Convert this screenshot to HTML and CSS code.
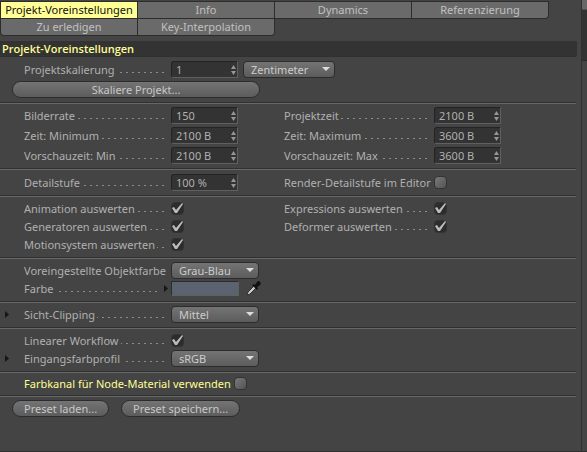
FILE: index.html
```html
<!DOCTYPE html>
<html lang="de">
<head>
<meta charset="utf-8">
<title>Projekt-Voreinstellungen</title>
<link rel="stylesheet" href="styles.css">
</head>
<body>
<div class="window">
<main class="panel">
  <nav class="tabs">
    <button class="tab active">Projekt-Voreinstellungen</button>
    <button class="tab">Info</button>
    <button class="tab">Dynamics</button>
    <button class="tab end">Referenzierung</button>
    <button class="tab first">Zu erledigen</button>
    <button class="tab end">Key-Interpolation</button>
  </nav>
  <h1 class="title">Projekt-Voreinstellungen</h1>

  <section class="group">
    <div class="row">
      <label class="label" for="scale">Projektskalierung<i class="dots"></i></label>
      <div class="control wide">
        <span class="field"><input id="scale" value="1"><svg class="spin" viewBox="0 0 5 10"><path d="M0 4L2.5 0L5 4ZM0 6L2.5 10L5 6Z"/></svg></span>
        <span class="select"><select aria-label="Einheit"><option>Zentimeter</option></select><svg class="arrow" viewBox="0 0 8 5"><path d="M0 0H8L4 4Z"/></svg></span>
      </div>
    </div>
    <div class="buttons"><button class="pill large">Skaliere Projekt...</button></div>
  </section>

  <section class="group">
    <div class="row">
      <label class="label" for="rate">Bilderrate<i class="dots"></i></label>
      <div class="control"><span class="field"><input id="rate" value="150"><svg class="spin" viewBox="0 0 5 10"><path d="M0 4L2.5 0L5 4ZM0 6L2.5 10L5 6Z"/></svg></span></div>
      <label class="label" for="time">Projektzeit<i class="dots"></i></label>
      <div class="control"><span class="field"><input id="time" value="2100 B"><svg class="spin" viewBox="0 0 5 10"><path d="M0 4L2.5 0L5 4ZM0 6L2.5 10L5 6Z"/></svg></span></div>
    </div>
    <div class="row">
      <label class="label" for="tmin">Zeit: Minimum<i class="dots"></i></label>
      <div class="control"><span class="field"><input id="tmin" value="2100 B"><svg class="spin" viewBox="0 0 5 10"><path d="M0 4L2.5 0L5 4ZM0 6L2.5 10L5 6Z"/></svg></span></div>
      <label class="label" for="tmax">Zeit: Maximum<i class="dots"></i></label>
      <div class="control"><span class="field"><input id="tmax" value="3600 B"><svg class="spin" viewBox="0 0 5 10"><path d="M0 4L2.5 0L5 4ZM0 6L2.5 10L5 6Z"/></svg></span></div>
    </div>
    <div class="row">
      <label class="label" for="pmin">Vorschauzeit: Min<i class="dots"></i></label>
      <div class="control"><span class="field"><input id="pmin" value="2100 B"><svg class="spin" viewBox="0 0 5 10"><path d="M0 4L2.5 0L5 4ZM0 6L2.5 10L5 6Z"/></svg></span></div>
      <label class="label" for="pmax">Vorschauzeit: Max<i class="dots"></i></label>
      <div class="control"><span class="field"><input id="pmax" value="3600 B"><svg class="spin" viewBox="0 0 5 10"><path d="M0 4L2.5 0L5 4ZM0 6L2.5 10L5 6Z"/></svg></span></div>
    </div>
  </section>

  <section class="group roomy">
    <div class="row">
      <label class="label" for="lod">Detailstufe<i class="dots"></i></label>
      <div class="control"><span class="field"><input id="lod" value="100 %"><svg class="spin" viewBox="0 0 5 10"><path d="M0 4L2.5 0L5 4ZM0 6L2.5 10L5 6Z"/></svg></span></div>
      <label class="label" for="rlod">Render-Detailstufe im Editor</label>
      <div class="control"><span class="check"><input type="checkbox" id="rlod"></span></div>
    </div>
  </section>

  <section class="group compact">
    <div class="row">
      <label class="label" for="anim">Animation auswerten<i class="dots"></i></label>
      <div class="control"><span class="check"><input type="checkbox" id="anim" checked><svg class="tick" viewBox="0 0 13 13"><path d="M1 6L3 5L5 8L11 1L12 2L6 11L4 11Z"/></svg></span></div>
      <label class="label" for="expr">Expressions auswerten<i class="dots"></i></label>
      <div class="control"><span class="check"><input type="checkbox" id="expr" checked><svg class="tick" viewBox="0 0 13 13"><path d="M1 6L3 5L5 8L11 1L12 2L6 11L4 11Z"/></svg></span></div>
    </div>
    <div class="row">
      <label class="label" for="gen">Generatoren auswerten<i class="dots"></i></label>
      <div class="control"><span class="check"><input type="checkbox" id="gen" checked><svg class="tick" viewBox="0 0 13 13"><path d="M1 6L3 5L5 8L11 1L12 2L6 11L4 11Z"/></svg></span></div>
      <label class="label" for="def">Deformer auswerten<i class="dots"></i></label>
      <div class="control"><span class="check"><input type="checkbox" id="def" checked><svg class="tick" viewBox="0 0 13 13"><path d="M1 6L3 5L5 8L11 1L12 2L6 11L4 11Z"/></svg></span></div>
    </div>
    <div class="row">
      <label class="label" for="motion">Motionsystem auswerten<i class="dots"></i></label>
      <div class="control"><span class="check"><input type="checkbox" id="motion" checked><svg class="tick" viewBox="0 0 13 13"><path d="M1 6L3 5L5 8L11 1L12 2L6 11L4 11Z"/></svg></span></div>
    </div>
  </section>

  <section class="group compact">
    <div class="row">
      <label class="label" for="objcol">Voreingestellte Objektfarbe</label>
      <div class="control wide"><span class="select"><select id="objcol"><option>Grau-Blau</option></select><svg class="arrow" viewBox="0 0 8 5"><path d="M0 0H8L4 4Z"/></svg></span></div>
    </div>
    <div class="row">
      <label class="label" for="color">Farbe<i class="dots"></i><svg class="fold inner" viewBox="0 0 4 7"><path d="M0 0L4 3.5L0 7Z"/></svg></label>
      <div class="control wide">
        <button class="swatch" id="color" aria-label="Farbe"></button>
        <button class="picker" aria-label="Pipette"><svg viewBox="0 0 15 15"><path class="glass" d="M1 14L2 11L8 5L10 7L4 13Z"/><path class="bulb" d="M6 4L8 3L9 4L11 1Q13-1 14 1Q16 3 13 5L11 6L12 7L11 9Z"/></svg></button>
      </div>
    </div>
  </section>

  <section class="group">
    <div class="row">
      <svg class="fold" viewBox="0 0 4 7"><path d="M0 0L4 3.5L0 7Z"/></svg>
      <label class="label" for="clip">Sicht-Clipping<i class="dots"></i></label>
      <div class="control wide"><span class="select"><select id="clip"><option>Mittel</option></select><svg class="arrow" viewBox="0 0 8 5"><path d="M0 0H8L4 4Z"/></svg></span></div>
    </div>
  </section>

  <section class="group compact">
    <div class="row">
      <label class="label" for="linear">Linearer Workflow<i class="dots"></i></label>
      <div class="control"><span class="check"><input type="checkbox" id="linear" checked><svg class="tick" viewBox="0 0 13 13"><path d="M1 6L3 5L5 8L11 1L12 2L6 11L4 11Z"/></svg></span></div>
    </div>
    <div class="row">
      <svg class="fold" viewBox="0 0 4 7"><path d="M0 0L4 3.5L0 7Z"/></svg>
      <label class="label" for="profile">Eingangsfarbprofil<i class="dots"></i></label>
      <div class="control wide"><span class="select"><select id="profile"><option>sRGB</option></select><svg class="arrow" viewBox="0 0 8 5"><path d="M0 0H8L4 4Z"/></svg></span></div>
    </div>
  </section>

  <section class="group tight">
    <div class="single">
      <label class="changed" for="node">Farbkanal für Node-Material verwenden</label>
      <span class="check"><input type="checkbox" id="node"></span>
    </div>
  </section>

  <section class="group">
    <div class="buttons">
      <button class="pill">Preset laden...</button>
      <button class="pill">Preset speichern...</button>
    </div>
  </section>
</main>
<aside class="scrollbar"><div class="thumb"></div><div class="track"></div></aside>
</div>
</body>
</html>
```
FILE: styles.css
```css
* { box-sizing: border-box; }
body {
  margin: 0;
  background: #444;
  color: #b0b0b0;
  font: 11px/16px "Noto Sans", "Open Sans", sans-serif;
}
button, input, select { font: inherit; color: inherit; margin: 0; }
svg { display: block; overflow: visible; }

.window {
  display: flex;
  min-height: 100vh;
  border-bottom: 1px solid #303030;
}
.panel { flex: 1; min-width: 0; }

.tabs {
  display: grid;
  grid-template-columns: repeat(4, 1fr);
  gap: 1px;
  margin: 1px 33px 5px 1px;
  padding: 1px 0;
}
.tab {
  height: 16px;
  padding: 0;
  border: 0;
  line-height: 16px;
  background: #6a6a6a;
  color: #c0c0c0;
  box-shadow: 0 0 0 1px #2c2c2c;
}
.tab.active { background: #ffff96; color: #111; }
.tab.end { border-radius: 0 0 3px 0; }
.tab.first { border-radius: 0 0 0 3px; }

.title {
  margin: 0 4px 0 0;
  padding: 0 2px;
  background: #333;
  color: #ffff96;
  font-family: "Open Sans", "Noto Sans", sans-serif;
  font-size: 11px;
  line-height: 15px;
  font-weight: 600;
}

.group {
  display: flex;
  flex-direction: column;
  gap: 3px;
  margin-right: 5px;
  padding: 4px 0;
  border-top: 1px solid #303030;
  box-shadow: inset 0 1px #686868;
}
.group.compact { gap: 1px; }
.group.roomy { padding-top: 5px; }
.group.tight { padding: 3px 0; }
.title + .group { box-shadow: none; }

.row {
  display: grid;
  grid-template-columns: 147px 113px 150px auto;
  align-items: center;
  min-height: 17px;
  padding-left: 24px;
  position: relative;
}
.label { display: flex; align-items: center; white-space: nowrap; }
.dots {
  flex: 1;
  height: 1px;
  margin: 6px 7px 0 2px;
  background: repeating-linear-gradient(to left, #8c8c8c 0 2px, transparent 2px 6px);
}
.control { display: flex; align-items: center; gap: 5px; }
.control.wide { grid-column: span 3; }

.field {
  display: flex;
  align-items: center;
  width: 67px;
  height: 17px;
  padding-right: 1px;
  background: #333;
  border: 1px solid;
  border-color: #232323 #606060 #606060 #232323;
  border-radius: 3px 0 0 3px;
}
.field input {
  flex: 1;
  min-width: 0;
  height: 15px;
  padding: 0 0 0 4px;
  border: 0;
  background: none;
  outline: 0;
}
.spin { width: 5px; height: 10px; fill: #969696; }

.select { position: relative; display: flex; width: 88px; }
.select:nth-child(2) { width: 92px; }
.select select {
  appearance: none;
  width: 100%;
  height: 17px;
  padding: 0 7px;
  border: 1px solid #2c2c2c;
  border-radius: 4px;
  background: linear-gradient(#747474, #5c5c5c);
  color: #ccc;
  line-height: 15px;
}
.arrow {
  position: absolute;
  right: 5px;
  top: 6px;
  width: 8px;
  height: 5px;
  fill: #ddd;
  pointer-events: none;
}

.check { position: relative; display: flex; }
.check input {
  appearance: none;
  width: 13px;
  height: 13px;
  border: 1px solid #333;
  border-radius: 4px;
  background: linear-gradient(135deg, #787878, #555);
}
.check input:checked { background: #2c2c2c; }
.tick {
  position: absolute;
  inset: 0;
  width: 13px;
  height: 13px;
  fill: #bbb;
  pointer-events: none;
}

.swatch {
  width: 68px;
  height: 15px;
  padding: 0;
  background: #5b6370;
  border: 1px solid;
  border-color: #2c2c2c #606060 #606060 #2c2c2c;
}
.picker { padding: 0 0 0 2px; border: 0; background: none; }
.picker svg { width: 15px; height: 15px; }
.glass { fill: #c8c8c8; stroke: #333; }
.bulb { fill: #111; }

.fold {
  position: absolute;
  left: 5px;
  width: 4px;
  height: 7px;
  fill: #161616;
}
.fold.inner { position: static; margin-right: 3px; }

.single { display: flex; align-items: center; gap: 3px; padding-left: 24px; min-height: 17px; }
.changed { color: #ffff96; }

.buttons { display: flex; gap: 12px; padding-left: 12px; }
.pill {
  height: 17px;
  padding: 0 11px;
  border: 1px solid #2c2c2c;
  border-radius: 9px;
  background: linear-gradient(#747474, #5c5c5c);
  color: #c8c8c8;
  line-height: 14px;
}
.pill.large { width: 248px; }

.scrollbar { display: flex; flex-direction: column; width: 6px; border-left: 1px solid #303030; }
.thumb { height: 10px; background: #686868; border-bottom: 1px solid #505050; }
.track { height: 51px; background: #333; border-bottom: 1px solid #2a2a2a; }
```
